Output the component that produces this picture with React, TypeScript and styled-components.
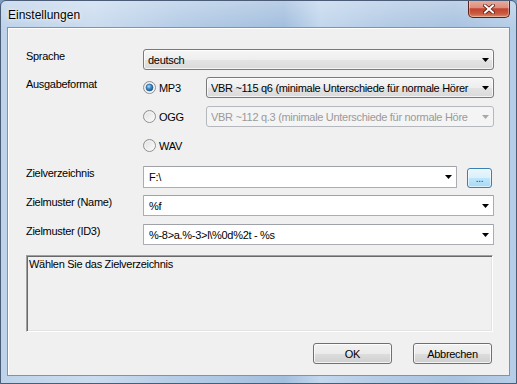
import React from 'react';
import styled, { createGlobalStyle, css } from 'styled-components';

const GlobalStyle = createGlobalStyle`
  html, body { margin: 0; padding: 0; }
  body {
    background: #7d9cc0;
    font-family: "Liberation Sans", Arial, sans-serif;
    font-size: 11px;
    letter-spacing: -0.3px;
    color: #000;
  }
  * { box-sizing: border-box; }
`;

const Window = styled.div`
  width: 517px;
  height: 384px;
  display: flex;
  flex-direction: column;
  border: 1px solid #4b5d76;
  border-radius: 6px 6px 0 0;
  overflow: hidden;
  background:
    linear-gradient(180deg, rgba(255,255,255,0.25) 0px, rgba(255,255,255,0) 26px),
    linear-gradient(90deg, #bed3ea 0%, #cbdcef 18%, #b5cce6 35%, #a3bfde 55%, #c3d7ed 62%, #b4cbe5 75%, #a9c3e0 88%, #b7cee8 100%);
`;

const TitleBar = styled.div`
  height: 26px;
  flex: none;
  display: flex;
  align-items: center;
  padding-left: 7px;
  padding-right: 6px;
`;

const Title = styled.span`
  font-family: "Liberation Sans", Arial, sans-serif;
  font-size: 12px;
  letter-spacing: 0;
  color: #000;
  text-shadow: 0 0 6px rgba(255,255,255,0.95), 0 0 2px rgba(255,255,255,0.9);
  margin-top: 1px;
`;

const CloseButton = styled.div`
  margin-left: auto;
  align-self: flex-start;
  margin-top: -1px;
  width: 42px;
  height: 18px;
  flex: none;
  border: 1px solid #5e2118;
  border-top: none;
  border-radius: 0 0 5px 5px;
  background: linear-gradient(180deg, #eab0a3 0%, #dc8e7d 45%, #c4422f 52%, #c95a40 80%, #dd8a62 100%);
  box-shadow: inset 0 0 0 1px rgba(255,255,255,0.35);
  display: flex;
  align-items: center;
  justify-content: center;
`;

const Frame = styled.div`
  flex: 1;
  min-height: 0;
  display: flex;
  padding: 0 6px 7px 6px;
`;

const Client = styled.div`
  flex: 1;
  min-width: 0;
  overflow: hidden;
  display: flex;
  flex-direction: column;
  background: #f0f0f0;
  border: 1px solid #7f93ad;
  box-shadow: inset 1px 1px 0 #ffffff;
  padding: 21px 15px 12px 18px;
`;

const Row = styled.div<{ $mt?: number }>`
  display: flex;
  align-items: flex-start;
  min-width: 0;
  margin-top: ${p => p.$mt ?? 0}px;
`;

const Label = styled.div`
  width: 117px;
  flex: none;
  line-height: 13px;
  padding-top: 1px;
`;

const Field = styled.div`
  flex: 1;
  display: flex;
  align-items: center;
  gap: 10px;
  min-width: 0;
`;

const RadioGroup = styled.div`
  flex: 1;
  display: flex;
  flex-direction: column;
  gap: 8px;
  min-width: 0;
`;

const RadioRow = styled.div`
  height: 21px;
  display: flex;
  align-items: center;
  min-width: 0;
`;

const RadioLabel = styled.label`
  width: 63px;
  flex: none;
  display: flex;
  align-items: center;
  gap: 3px;
`;

type ComboKind = 'list' | 'disabled' | 'edit';

const Combo = styled.div<{ $kind: ComboKind; $h?: number }>`
  flex: 1;
  min-width: 0;
  height: ${p => p.$h ?? 21}px;
  display: flex;
  align-items: center;
  padding: 0 4px 0 4px;
  ${p => p.$kind === 'list' && css`
    border: 1px solid #7a7a7a;
    border-radius: 3px;
    background: linear-gradient(180deg, #f6f6f6 0%, #eeeeee 50%, #e3e3e3 52%, #dadada 100%);
    box-shadow: inset 0 0 0 1px rgba(255,255,255,0.7);
    color: #000;
  `}
  ${p => p.$kind === 'disabled' && css`
    border: 1px solid #b5b9bd;
    border-radius: 3px;
    background: #f4f4f4;
    color: #9a9a9a;
  `}
  ${p => p.$kind === 'edit' && css`
    border: 1px solid #abadb3;
    border-top-color: #9ea1a8;
    border-radius: 1px;
    background: #ffffff;
    color: #000;
    padding-left: 5px;
  `}
`;

const ComboText = styled.span`
  flex: 1;
  min-width: 0;
  overflow: hidden;
  white-space: nowrap;
  margin-right: 2px;
`;

const BrowseButton = styled.div`
  width: 25px;
  height: 20px;
  flex: none;
  margin-right: 2px;
  margin-top: 2px;
  border: 1px solid #3c7fb1;
  border-radius: 3px;
  background: linear-gradient(180deg, #eaf6fd 0%, #d9f0fc 50%, #bee6fd 52%, #a7d9f5 100%);
  box-shadow: inset 0 0 0 1px rgba(255,255,255,0.6);
  display: flex;
  align-items: flex-end;
  justify-content: center;
  padding-bottom: 3px;
  font-size: 10px;
  line-height: 10px;
  color: #1c3a55;
`;

const StatusBox = styled.div`
  height: 77px;
  flex: none;
  margin-top: 10px;
  background: #f0f0f0;
  border-top: 1px solid #a0a0a0;
  border-left: 1px solid #a0a0a0;
  border-right: 1px solid #ffffff;
  border-bottom: 1px solid #ffffff;
  box-shadow: inset 1px 1px 0 #696969, inset -1px -1px 0 #e3e3e3;
  padding: 2px 0 0 2px;
  line-height: 13px;
  margin-right: 1px;
`;

const ButtonBar = styled.div`
  margin-top: 11px;
  display: flex;
  justify-content: flex-end;
  gap: 21px;
  padding-right: 2px;
`;

const PushButton = styled.button`
  width: 79px;
  height: 21px;
  font-family: "Liberation Sans", Arial, sans-serif;
  font-size: 11px;
  letter-spacing: -0.3px;
  color: #000;
  border: 1px solid #707070;
  border-radius: 3px;
  background: linear-gradient(180deg, #f2f2f2 0%, #ebebeb 50%, #dddddd 52%, #cfcfcf 100%);
  box-shadow: inset 0 0 0 1px rgba(255,255,255,0.75);
  padding: 0;
`;

const Arrow: React.FC<{ disabled?: boolean }> = ({ disabled }) => (
  <svg width="7" height="4" viewBox="0 0 7 4" style={{ flex: 'none' }}>
    <polygon points="0,0 7,0 3.5,4" fill={disabled ? '#a8a8a8' : '#000'} />
  </svg>
);

const Radio: React.FC<{ checked?: boolean }> = ({ checked }) => (
  <svg width="13" height="13" viewBox="0 0 13 13" style={{ flex: 'none' }}>
    <defs>
      <linearGradient id="rbg" x1="0" y1="0" x2="1" y2="1">
        <stop offset="0" stopColor="#dcdcdc" />
        <stop offset="1" stopColor="#ffffff" />
      </linearGradient>
      <radialGradient id="rdot" cx="0.4" cy="0.35" r="0.7">
        <stop offset="0" stopColor="#b7e0fb" />
        <stop offset="0.45" stopColor="#3f8fd2" />
        <stop offset="1" stopColor="#0e4f8e" />
      </radialGradient>
    </defs>
    <circle cx="6.5" cy="6.5" r="6" fill="url(#rbg)" stroke="#8e8f8f" strokeWidth="1" />
    <circle cx="6.5" cy="6.5" r="4.5" fill="none" stroke="#f4f4f4" strokeWidth="1" />
    {checked && <circle cx="6.5" cy="6.5" r="3.5" fill="url(#rdot)" stroke="#1d5a8f" strokeWidth="0.6" />}
  </svg>
);

const CloseX = () => (
  <svg width="12" height="10" viewBox="0 0 12 10">
    <path d="M2 1.5 L10 8.5 M10 1.5 L2 8.5" stroke="#5a1a10" strokeWidth="3.6" strokeLinecap="square" />
    <path d="M2 1.5 L10 8.5 M10 1.5 L2 8.5" stroke="#ffffff" strokeWidth="2" strokeLinecap="square" />
  </svg>
);

export default function App() {
  return (
    <>
      <GlobalStyle />
      <Window>
        <TitleBar>
          <Title>Einstellungen</Title>
          <CloseButton><CloseX /></CloseButton>
        </TitleBar>
        <Frame>
          <Client>
            <Row>
              <Label>Sprache</Label>
              <Field>
                <Combo $kind="list"><ComboText>deutsch</ComboText><Arrow /></Combo>
              </Field>
            </Row>
            <Row $mt={7}>
              <Label>Ausgabeformat</Label>
              <RadioGroup>
                <RadioRow>
                  <RadioLabel><Radio checked />MP3</RadioLabel>
                  <Combo $kind="list"><ComboText>VBR ~115 q6 (minimale Unterschiede für normale Hörer</ComboText><Arrow /></Combo>
                </RadioRow>
                <RadioRow>
                  <RadioLabel><Radio />OGG</RadioLabel>
                  <Combo $kind="disabled"><ComboText>VBR ~112 q.3 (minimale Unterschiede für normale Höre</ComboText><Arrow disabled /></Combo>
                </RadioRow>
                <RadioRow>
                  <RadioLabel><Radio />WAV</RadioLabel>
                </RadioRow>
              </RadioGroup>
            </Row>
            <Row $mt={10}>
              <Label>Zielverzeichnis</Label>
              <Field>
                <Combo $kind="edit" $h={22}><ComboText>F:\</ComboText><Arrow /></Combo>
                <BrowseButton>...</BrowseButton>
              </Field>
            </Row>
            <Row $mt={7}>
              <Label>Zielmuster (Name)</Label>
              <Field>
                <Combo $kind="edit"><ComboText>%f</ComboText><Arrow /></Combo>
              </Field>
            </Row>
            <Row $mt={8}>
              <Label>Zielmuster (ID3)</Label>
              <Field>
                <Combo $kind="edit"><ComboText>%-8&gt;a.%-3&gt;l\%0d%2t - %s</ComboText><Arrow /></Combo>
              </Field>
            </Row>
            <StatusBox>Wählen Sie das Zielverzeichnis</StatusBox>
            <ButtonBar>
              <PushButton>OK</PushButton>
              <PushButton>Abbrechen</PushButton>
            </ButtonBar>
          </Client>
        </Frame>
      </Window>
    </>
  );
}
